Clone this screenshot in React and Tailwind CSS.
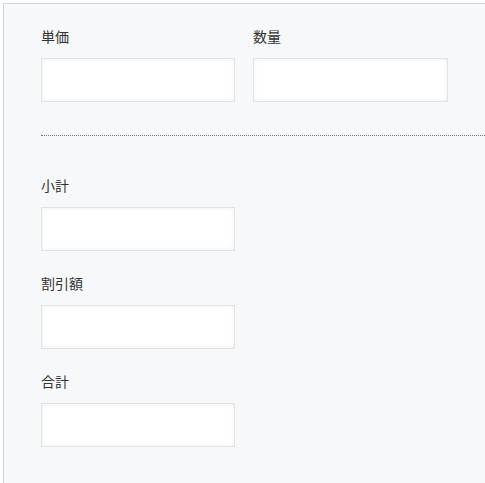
export default function App() {
  const Field = ({ label, className = "" }) => (
    <div className={`flex flex-col ${className}`}>
      <label className="text-[14px] leading-[21px] text-[#333] mb-[11px]">{label}</label>
      <input
        type="text"
        className="w-[194px] h-[44px] bg-white border border-[#e3e3e3] shadow-[inset_0_0_4px_rgba(0,0,0,0.07)] outline-none"
      />
    </div>
  );

  return (
    <div
      className="w-screen h-screen overflow-hidden bg-white"
      style={{ fontFamily: '"Noto Sans CJK JP", "Noto Sans", sans-serif' }}
    >
      <div className="ml-[3px] mt-[3px] h-[600px] border-l border-t border-[#d6d6d6] bg-[#f7f8fa] pl-[37px] pt-[22px]">
        <div className="flex gap-[18px]">
          <Field label="単価" />
          <Field label="数量" className="[&_input]:w-[195px]" />
        </div>
        <div className="mt-[33px] border-t border-dotted border-[#777]" />
        <div className="mt-[39px] flex flex-col gap-[22px]">
          <Field label="小計" />
          <Field label="割引額" />
          <Field label="合計" />
        </div>
      </div>
    </div>
  );
}
